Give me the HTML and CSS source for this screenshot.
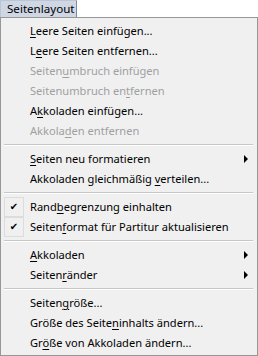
FILE: index.html
```html
<!DOCTYPE html>
<html lang="de">
<head>
    <meta charset="UTF-8">
    <title>Seitenlayout</title>
    <link rel="stylesheet" href="styles.css">
</head>
<body>

    <div class="menubar">
        <span class="menu-title">Seitenlayout</span>
    </div>

    <ul class="menu">
        <li class="item"><span class="label"><u>L</u>eere Seiten einfügen...</span></li>
        <li class="item"><span class="label">L<u>e</u>ere Seiten entfernen...</span></li>
        <li class="item disabled"><span class="label">Seiten<u>u</u>mbruch einfügen</span></li>
        <li class="item disabled"><span class="label">Seitenumbruch en<u>t</u>fernen</span></li>
        <li class="item"><span class="label">A<u>k</u>koladen einfügen...</span></li>
        <li class="item disabled"><span class="label">Akkola<u>d</u>en entfernen</span></li>
        <li class="sep"></li>
        <li class="item sub"><span class="label"><u>S</u>eiten neu formatieren</span></li>
        <li class="item"><span class="label">Akkoladen gleichmäßig <u>v</u>erteilen...</span></li>
        <li class="sep"></li>
        <li class="item checked"><span class="check">✔</span><span class="label">Rand<u>b</u>egrenzung einhalten</span></li>
        <li class="item checked"><span class="check">✔</span><span class="label">Seiten<u>f</u>ormat für Partitur aktualisieren</span></li>
        <li class="sep"></li>
        <li class="item sub"><span class="label"><u>A</u>kkoladen</span></li>
        <li class="item sub"><span class="label">Seiten<u>r</u>änder</span></li>
        <li class="sep"></li>
        <li class="item"><span class="label">Seiten<u>g</u>röße...</span></li>
        <li class="item"><span class="label">Größe des Seite<u>n</u>inhalts ändern...</span></li>
        <li class="item"><span class="label">Gr<u>ö</u>ße von Akkoladen ändern...</span></li>
    </ul>

</body>
</html>
```

FILE: styles.css
```css
body {
    margin: 0;
    padding: 0;
    background-color: #fff;
    font-family: "Noto Sans", "Open Sans", sans-serif;
    font-size: 11.1px;
    color: #000;
}

.menubar {
    height: 17px;
    display: flex;
}

.menu-title {
    box-sizing: border-box;
    width: 77px;
    height: 17px;
    padding-left: 6px;
    font-size: 11.6px;
    line-height: 16px;
    background-color: #cfd7e5;
    border: 1px solid #bcc5d3;
    border-right-color: #7f8aa0;
    border-bottom: none;
}

.menu {
    list-style: none;
    margin: 0;
    padding: 3px 0 2px;
    box-sizing: border-box;
    height: 339px;
    background-color: #f0f0f0;
    border: 1px solid #979797;
}

.item {
    position: relative;
    height: 20px;
    line-height: 20px;
    padding-left: 29px;
    white-space: nowrap;
}

.item u {
    text-underline-offset: 2px;
}

.disabled {
    color: #a0a0a0;
}

.sub::after {
    content: "";
    position: absolute;
    right: 9px;
    top: 6px;
    border-left: 4px solid #000;
    border-top: 4px solid transparent;
    border-bottom: 4px solid transparent;
}

.check {
    position: absolute;
    left: 3px;
    top: 0;
    width: 18px;
    height: 18px;
    line-height: 18px;
    text-align: center;
    font-family: "DejaVu Sans", sans-serif;
    font-size: 10px;
    border: 1px solid #dcdcdc;
    background-color: #f0f0f0;
}

.sep {
    height: 0;
    margin: 3px 4px 3px 3px;
    border-top: 1px solid #c6c6c6;
    border-bottom: 1px solid #fff;
}
```
